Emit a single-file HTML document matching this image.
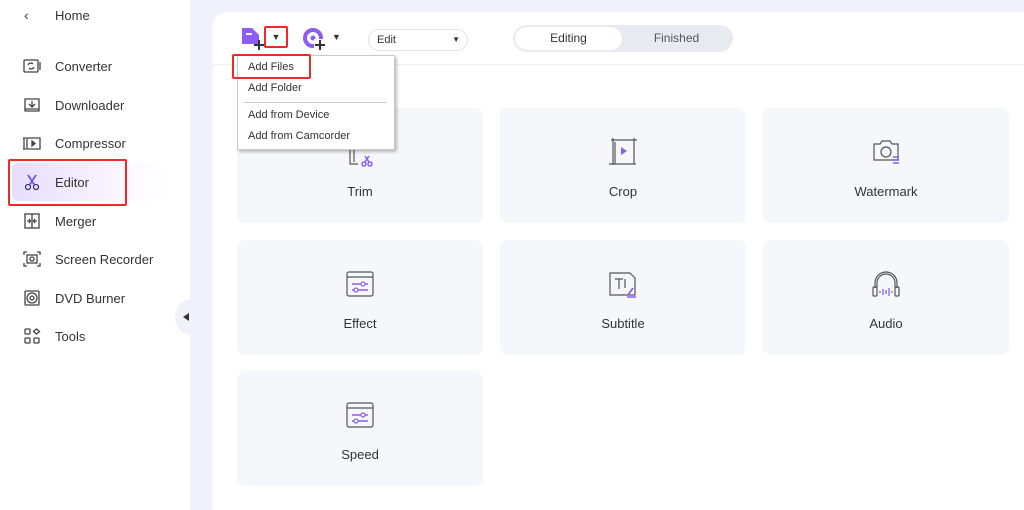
<!DOCTYPE html>
<html><head><style>
*{margin:0;padding:0;box-sizing:border-box}
body{width:1024px;height:510px;background:#eff2fa;font-family:"Liberation Sans",sans-serif;position:relative;overflow:hidden;color:#333}
.side{position:absolute;left:0;top:0;width:190px;height:510px;background:#fff}
.it{position:absolute;left:22px;font-size:13px;color:#333;display:flex;align-items:center}
.it svg{width:20px;height:20px;margin-right:13px}
.sel{position:absolute;left:12px;top:163px;width:162px;height:38px;border-radius:6px;background:linear-gradient(90deg,#e6defc,#faf8ff 70%,#fff)}
.red{position:absolute;border:2px solid #f0282a;border-radius:2px}
.main{position:absolute;left:213px;top:12px;width:811px;height:498px;background:#fff;border-top-left-radius:14px}
.hdr{position:absolute;left:213px;top:64px;width:811px;height:1px;background:#eef0f5}
.card{position:absolute;width:246px;height:115px;background:#f6f7fb;border-radius:8px;text-align:center;font-size:13px;color:#333}
.card svg{position:absolute;left:107px;top:28px;width:32px;height:32px}
.card span{position:absolute;left:0;right:0;top:76px}
.menu{position:absolute;left:237px;top:55px;width:158px;height:95px;background:#fff;border:1px solid #c9c9c9;box-shadow:2px 2px 3px rgba(0,0,0,.25);font-size:11px;color:#333}
.menu div{position:absolute;left:10px}
</style></head><body>
<div class="side">
<div style="position:absolute;left:24px;top:7px;font-size:14px">&#8249;</div>
<div style="position:absolute;left:55px;top:8px;font-size:13px">Home</div>
<div class="sel"></div>
<div class="it" style="top:56px"><svg viewBox="0 0 20 20" fill="none" stroke="#444" stroke-width="1.3"><rect x="2" y="4" width="14" height="12" rx="1"/><path d="M18 6v8M6 9a3 3 0 0 1 5-1M12 11a3 3 0 0 1-5 1"/></svg>Converter</div>
<div class="it" style="top:95px"><svg viewBox="0 0 20 20" fill="none" stroke="#444" stroke-width="1.3"><path d="M3 4h14v12H3zM10 6v6M7 9l3 3 3-3M3 14h14"/></svg>Downloader</div>
<div class="it" style="top:133px"><svg viewBox="0 0 20 20" fill="none" stroke="#444" stroke-width="1.3"><path d="M2 5v11M1 5h3M1 16h3M5 5h13v11H5z"/><path d="M10 8l3 2.5-3 2.5z" fill="#444"/></svg>Compressor</div>
<div class="it" style="top:172px"><svg viewBox="0 0 20 20" fill="none" stroke="#3a3a5a" stroke-width="1.3"><circle cx="6" cy="15" r="2.5"/><circle cx="14" cy="15" r="2.5"/><path d="M7.5 13L14 3M12.5 13L6 3" stroke="#7b4ff0" stroke-width="1.8"/></svg>Editor</div>
<div class="it" style="top:211px"><svg viewBox="0 0 20 20" fill="none" stroke="#444" stroke-width="1.3"><rect x="3" y="3" width="14" height="14"/><path d="M10 3v14M5 10h3M15 10h-3M7 8l1.5 2L7 12M13 8l-1.5 2 1.5 2"/></svg>Merger</div>
<div class="it" style="top:249px"><svg viewBox="0 0 20 20" fill="none" stroke="#444" stroke-width="1.3"><path d="M2 6V3h3M15 3h3v3M18 14v3h-3M5 17H2v-3"/><rect x="5" y="6" width="10" height="8"/><circle cx="10" cy="10" r="2"/></svg>Screen Recorder</div>
<div class="it" style="top:288px"><svg viewBox="0 0 20 20" fill="none" stroke="#444" stroke-width="1.3"><rect x="3" y="3" width="14" height="14" rx="1"/><circle cx="10" cy="10" r="5"/><circle cx="10" cy="10" r="2"/></svg>DVD Burner</div>
<div class="it" style="top:326px"><svg viewBox="0 0 20 20" fill="none" stroke="#444" stroke-width="1.3"><rect x="3" y="3" width="5" height="5" rx="1"/><rect x="3" y="12" width="5" height="5" rx="1"/><rect x="12" y="12" width="5" height="5" rx="1"/><path d="M14.5 3l3 2.5-3 2.5-3-2.5z"/></svg>Tools</div>
</div>
<div class="red" style="left:8px;top:159px;width:119px;height:47px"></div>
<div style="position:absolute;left:175px;top:300px;width:26px;height:34px;border-radius:50% 0 0 50%;background:#eff2fa"></div>
<div style="position:absolute;left:183px;top:313px;width:0;height:0;border-right:6px solid #333;border-top:4px solid transparent;border-bottom:4px solid transparent"></div>
<div class="main"></div>
<div class="hdr"></div>
<!-- toolbar -->
<svg style="position:absolute;left:240px;top:26px" width="26" height="26" viewBox="0 0 26 26"><path d="M2 2h10l7 7v9H2z" fill="#8c5cf5"/><path d="M6 8h6" stroke="#fff" stroke-width="2"/><path d="M19 14v10M14 19h10" stroke="#333" stroke-width="2"/></svg>
<div style="position:absolute;left:264px;top:26px;width:24px;height:22px;border:2px solid #f0282a;border-radius:2px;font-size:9px;text-align:center;line-height:18px">&#9660;</div>
<svg style="position:absolute;left:301px;top:26px" width="28" height="26" viewBox="0 0 28 26"><circle cx="12" cy="12" r="8" fill="none" stroke="#8c5cf5" stroke-width="4"/><circle cx="12" cy="12" r="2.5" fill="#8c5cf5"/><rect x="13" y="13" width="12" height="12" fill="#fff"/><path d="M19 14v10M14 19h10" stroke="#333" stroke-width="2"/></svg>
<div style="position:absolute;left:332px;top:32px;font-size:9px">&#9660;</div>
<div style="position:absolute;left:368px;top:29px;width:100px;height:22px;border:1px solid #e2e4ea;border-radius:11px;font-size:11px;line-height:20px;padding-left:8px">Edit<span style="position:absolute;right:7px;font-size:8px">&#9660;</span></div>
<div style="position:absolute;left:513px;top:25px;width:220px;height:27px;background:#e8eaf1;border-radius:14px"></div>
<div style="position:absolute;left:515px;top:27px;width:107px;height:23px;background:#fff;border-radius:12px;font-size:12px;text-align:center;line-height:23px">Editing</div>
<div style="position:absolute;left:622px;top:27px;width:109px;height:23px;font-size:12px;text-align:center;line-height:23px;color:#555">Finished</div>
<!-- cards -->
<div class="card" style="left:237px;top:108px"><svg viewBox="0 0 32 32" fill="none" stroke="#555" stroke-width="1.2"><path d="M6 0v28h8M10 0v26"/><circle cx="20" cy="28" r="2" stroke="#8c5cf5" stroke-width="1.5"/><circle cx="26" cy="28" r="2" stroke="#8c5cf5" stroke-width="1.5"/><path d="M21 26l4-6M25 26l-4-6" stroke="#8c5cf5" stroke-width="1.5"/></svg><span>Trim</span></div>
<div class="card" style="left:500px;top:108px"><svg viewBox="0 0 32 32" fill="none" stroke="#555" stroke-width="1.2"><path d="M6 2v27M2 28h27M27 2v26M4 4h26M8 6v22"/><path d="M14 11l6 4-6 4z" fill="#8c5cf5" stroke="none"/></svg><span>Crop</span></div>
<div class="card" style="left:763px;top:108px"><svg viewBox="0 0 32 32" fill="none" stroke="#555" stroke-width="1.2"><path d="M4 8h6l2-3h8l2 3h6v16H4z"/><circle cx="16" cy="16" r="5"/><path d="M23 21h6M23 24h6M23 27h6" stroke="#8c5cf5" stroke-width="1.4"/></svg><span>Watermark</span></div>
<div class="card" style="left:237px;top:240px"><svg viewBox="0 0 32 32" fill="none" stroke="#555" stroke-width="1.2"><rect x="3" y="4" width="26" height="24" rx="2"/><path d="M3 9h26"/><path d="M8 16h16M8 22h16" stroke="#8c5cf5" stroke-width="1.5"/><circle cx="19" cy="16" r="2" fill="#fff" stroke="#8c5cf5"/><circle cx="12" cy="22" r="2" fill="#fff" stroke="#8c5cf5"/></svg><span>Effect</span></div>
<div class="card" style="left:500px;top:240px"><svg viewBox="0 0 32 32" fill="none" stroke="#555" stroke-width="1.2"><path d="M3 5h20l5 5v17H3z"/><path d="M8 11h8M12 11v10M18 11v9"/><path d="M21 27l5-7" stroke="#8c5cf5" stroke-width="1.8"/><path d="M20 29h9" stroke="#8c5cf5" stroke-width="1.5"/></svg><span>Subtitle</span></div>
<div class="card" style="left:763px;top:240px"><svg viewBox="0 0 32 32" fill="none" stroke="#555" stroke-width="1.2"><path d="M5 20v-5a11 11 0 0 1 22 0v5M7 20v-5a9 9 0 0 1 18 0v5"/><rect x="3" y="19" width="4" height="9" rx="1"/><rect x="25" y="19" width="4" height="9" rx="1"/><path d="M10 23v2M13 21v6M16 22v4M19 20v8M22 23v2" stroke="#8c5cf5" stroke-width="1.3"/></svg><span>Audio</span></div>
<div class="card" style="left:237px;top:371px"><svg viewBox="0 0 32 32" fill="none" stroke="#555" stroke-width="1.2"><rect x="3" y="4" width="26" height="24" rx="2"/><path d="M3 9h26"/><path d="M8 16h16M8 22h16" stroke="#8c5cf5" stroke-width="1.5"/><circle cx="19" cy="16" r="2" fill="#fff" stroke="#8c5cf5"/><circle cx="12" cy="22" r="2" fill="#fff" stroke="#8c5cf5"/></svg><span>Speed</span></div>
<!-- menu -->
<div class="menu">
<div style="top:5px">Add Files</div>
<div style="top:26px">Add Folder</div>
<div style="top:46px;left:6px;width:143px;height:1px;background:#ccc"></div>
<div style="top:53px">Add from Device</div>
<div style="top:74px">Add from Camcorder</div>
</div>
<div class="red" style="left:232px;top:54px;width:79px;height:25px"></div>
</body></html>
